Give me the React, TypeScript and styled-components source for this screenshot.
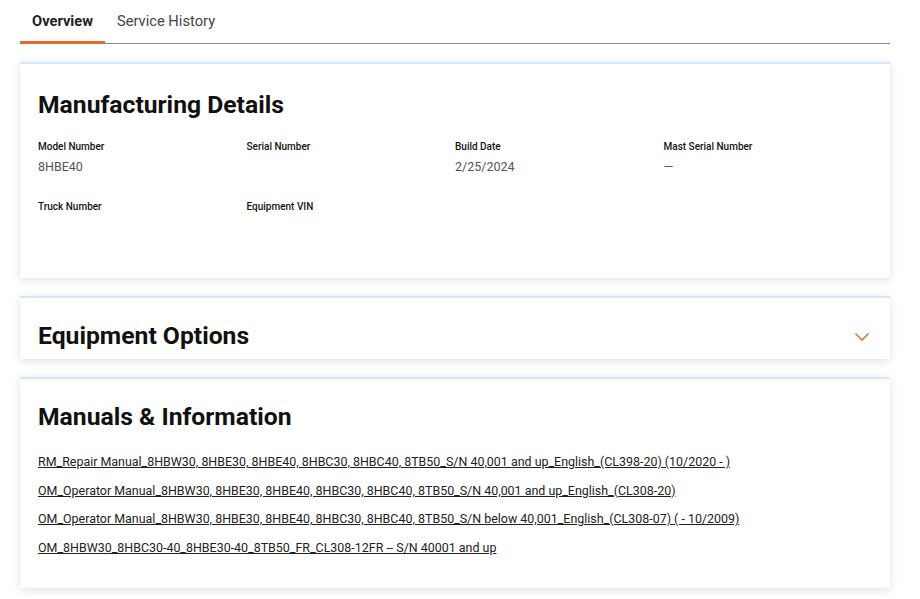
import styled, { createGlobalStyle } from "styled-components";

const GlobalStyle = createGlobalStyle`
    body {
        margin: 0;
        background: #ffffff;
        font-family: Roboto, "Liberation Sans", Arial, sans-serif;
        color: #222;
    }
`

// Tabs

const Page = styled.div`
    padding: 0 30px 20px 20px;
`

const TabBar = styled.div`
    display: flex;
    height: 44px;
    border-bottom: 1px solid #8a8a8a;
    box-sizing: border-box;
`

const Tab = styled.div<{ active?: boolean }>`
    display: flex;
    align-items: center;
    padding: 0 12px;
    font-size: 14.7px;
    font-weight: ${({ active }) => (active ? 700 : 400)};
    color: ${({ active }) => (active ? "#222" : "#444")};
    border-bottom: 3px solid ${({ active }) => (active ? "#e36a26" : "transparent")};
    margin-bottom: -1px;
    cursor: pointer;
`

// Cards

const Card = styled.section<{ top?: number; bottom?: number }>`
    margin-top: 18px;
    background: #fff;
    border-top: 2px solid #d2e7fb;
    box-shadow: 0 2px 9px rgba(0, 0, 0, 0.12);
    padding: ${({ top }) => top ?? 24}px 18px ${({ bottom }) => bottom ?? 30}px 18px;
`

const CardHeader = styled.div`
    display: flex;
    align-items: center;
    justify-content: space-between;
`

const Title = styled.h2`
    margin: 0;
    font-size: 24.7px;
    line-height: 28px;
    font-weight: 700;
    color: #111;
`

const FieldGrid = styled.div`
    display: grid;
    grid-template-columns: repeat(4, 1fr);
    row-gap: 23px;
    margin-top: 21px;
`

const Field = styled.div`
    display: flex;
    flex-direction: column;
    gap: 5px;
    min-height: 37px;
`

const FieldLabel = styled.div`
    font-size: 10px;
    line-height: 14px;
    font-weight: 500;
    color: #141414;
`

const FieldValue = styled.div`
    font-size: 12.5px;
    line-height: 16px;
    color: #555;
`

const Chevron = styled.svg`
    width: 16px;
    height: 10px;
    margin-right: 2px;
    margin-top: 2px;
`

const LinkList = styled.div`
    display: flex;
    flex-direction: column;
    gap: 12.5px;
    margin-top: 23px;
`

const ManualLink = styled.a`
    font-size: 12.45px;
    line-height: 16px;
    color: #222;
    text-decoration: underline;
    width: fit-content;
    cursor: pointer;
`

const fields = [
    { label: "Model Number", value: "8HBE40" },
    { label: "Serial Number", value: "" },
    { label: "Build Date", value: "2/25/2024" },
    { label: "Mast Serial Number", value: "—" },
    { label: "Truck Number", value: "" },
    { label: "Equipment VIN", value: "" },
]

const manuals = [
    "RM_Repair Manual_8HBW30, 8HBE30, 8HBE40, 8HBC30, 8HBC40, 8TB50_S/N 40,001 and up_English_(CL398-20) (10/2020 - )",
    "OM_Operator Manual_8HBW30, 8HBE30, 8HBE40, 8HBC30, 8HBC40, 8TB50_S/N 40,001 and up_English_(CL308-20)",
    "OM_Operator Manual_8HBW30, 8HBE30, 8HBE40, 8HBC30, 8HBC40, 8TB50_S/N below 40,001_English_(CL308-07) ( - 10/2009)",
    "OM_8HBW30_8HBC30-40_8HBE30-40_8TB50_FR_CL308-12FR -- S/N 40001 and up",
]

export default function App() {
    return (
        <Page>
            <GlobalStyle />
            <TabBar>
                <Tab active>Overview</Tab>
                <Tab>Service History</Tab>
            </TabBar>

            <Card top={27} bottom={41}>
                <Title>Manufacturing Details</Title>
                <FieldGrid>
                    {fields.map((f) => (
                        <Field key={f.label}>
                            <FieldLabel>{f.label}</FieldLabel>
                            <FieldValue>{f.value}</FieldValue>
                        </Field>
                    ))}
                </FieldGrid>
            </Card>

            <Card bottom={9}>
                <CardHeader>
                    <Title>Equipment Options</Title>
                    <Chevron viewBox="0 0 16 10" fill="none">
                        <path d="M1.5 1.5 L8 8 L14.5 1.5" stroke="#e8743a" strokeWidth="1.6" />
                    </Chevron>
                </CardHeader>
            </Card>

            <Card bottom={32}>
                <Title>Manuals &amp; Information</Title>
                <LinkList>
                    {manuals.map((m) => (
                        <ManualLink key={m}>{m}</ManualLink>
                    ))}
                </LinkList>
            </Card>
        </Page>
    )
}
